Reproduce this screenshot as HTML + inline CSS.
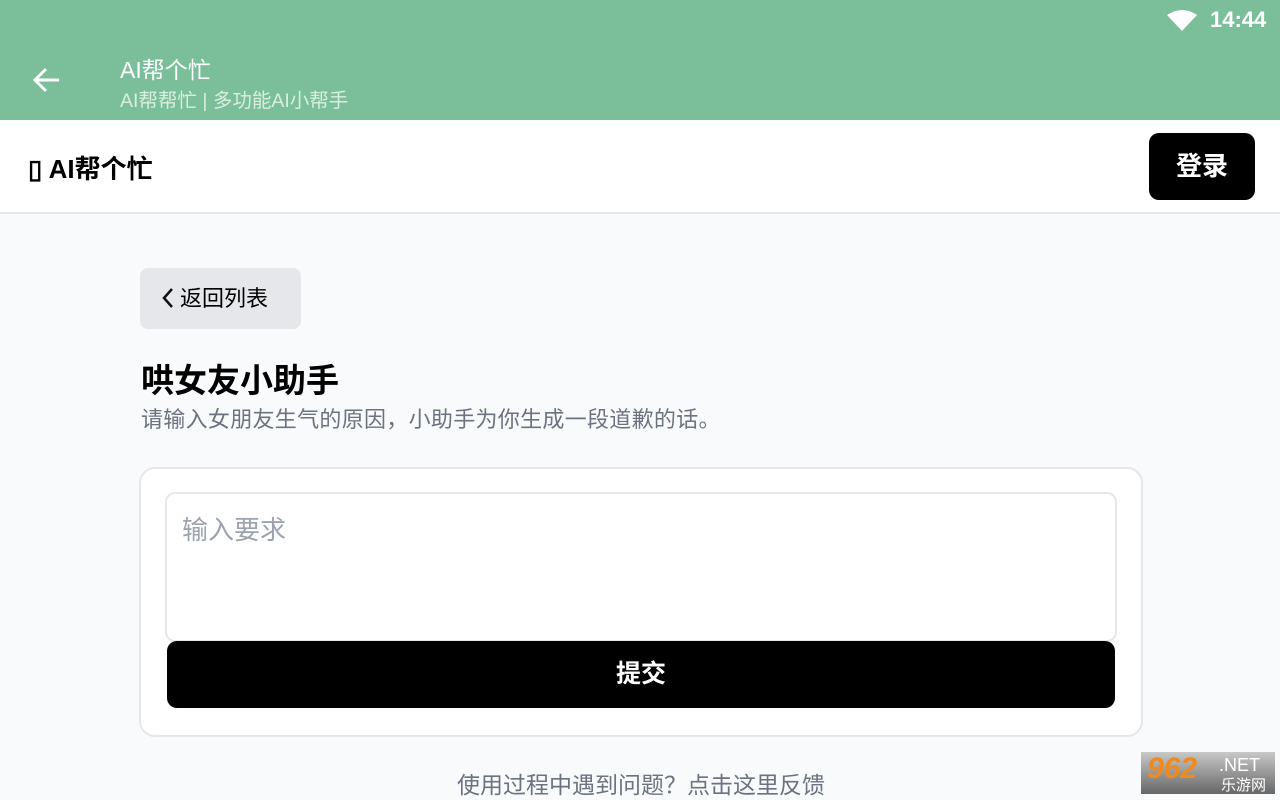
<!DOCTYPE html>
<html><head><meta charset="utf-8"><style>
*{margin:0;padding:0;box-sizing:border-box}
body{width:1280px;height:800px;overflow:hidden;background:#f9fafb;font-family:"Liberation Sans","Noto Sans CJK SC",sans-serif;position:relative}
.top{position:absolute;left:0;top:0;width:1280px;height:120px;background:#7bbf9a}
.abs{position:absolute}
</style></head><body>
<div class="top">
 <svg class="abs" style="left:1166px;top:9px" width="32" height="24" viewBox="0 0 32 24"><path d="M1 6 Q16 -4 31 6 L16 22 Z" fill="#fff"/></svg>
 <div class="abs" style="left:1210px;top:7px;color:#fff;font-size:22px;font-weight:bold">14:44</div>
 <svg class="abs" style="left:32px;top:66px" width="30" height="28" viewBox="0 0 30 28"><path d="M27 14H4M14 3L3 14l11 11" stroke="#fff" stroke-width="3" fill="none"/></svg>
 <div class="abs" style="left:120px;top:51px;color:#fff;font-size:23px">AI帮个忙</div>
 <div class="abs" style="left:120px;top:84px;color:#d8eee0;font-size:19.5px">AI帮帮忙 | 多功能AI小帮手</div>
</div>
<div class="abs" style="left:0;top:120px;width:1280px;height:94px;background:#fff;border-bottom:2px solid #e5e7eb"></div>
<div class="abs" style="left:28px;top:149px;font-size:26px;font-weight:bold">▯ AI帮个忙</div>
<div class="abs" style="left:1149px;top:133px;width:106px;height:67px;background:#000;border-radius:10px;color:#fff;font-size:26px;font-weight:bold;text-align:center;line-height:67px">登录</div>
<div class="abs" style="left:140px;top:268px;width:161px;height:61px;background:#e5e7eb;border-radius:8px;font-size:22px;line-height:61px;padding-left:40px">返回列表</div>
<svg class="abs" style="left:160px;top:287px" width="16" height="22" viewBox="0 0 16 22"><path d="M12 2L4 11l8 9" stroke="#111" stroke-width="2.5" fill="none"/></svg>
<div class="abs" style="left:141px;top:354px;font-size:33px;font-weight:bold">哄女友小助手</div>
<div class="abs" style="left:141px;top:402px;font-size:22px;letter-spacing:0.3px;color:#6b7280">请输入女朋友生气的原因，小助手为你生成一段道歉的话。</div>
<div class="abs" style="left:139px;top:467px;width:1004px;height:270px;background:#fff;border:2px solid #e5e7eb;border-radius:16px"></div>
<div class="abs" style="left:165px;top:492px;width:952px;height:150px;border:2px solid #e5e7eb;border-radius:10px;padding:16px 15px;font-size:26px;color:#9ca3af">输入要求</div>
<div class="abs" style="left:167px;top:641px;width:948px;height:67px;background:#000;border-radius:10px;color:#fff;font-size:25px;font-weight:bold;text-align:center;line-height:67px">提交</div>
<div class="abs" style="left:0;top:766px;width:1282px;text-align:center;font-size:23px;color:#6b7280">使用过程中遇到问题？点击这里反馈</div>
<div class="abs" style="left:1141px;top:752px;width:134px;height:42px;background:linear-gradient(#c8c8c8,#666);font-size:10px;color:#fff">
 <span class="abs" style="left:6px;top:0;font-size:30px;font-weight:bold;font-style:italic;color:#f08a1c">962</span>
 <span class="abs" style="left:78px;top:3px;font-size:18px;color:#fff">.NET</span>
 <span class="abs" style="left:80px;top:22px;font-size:15px;color:#fff">乐游网</span>
</div>
</body></html>
